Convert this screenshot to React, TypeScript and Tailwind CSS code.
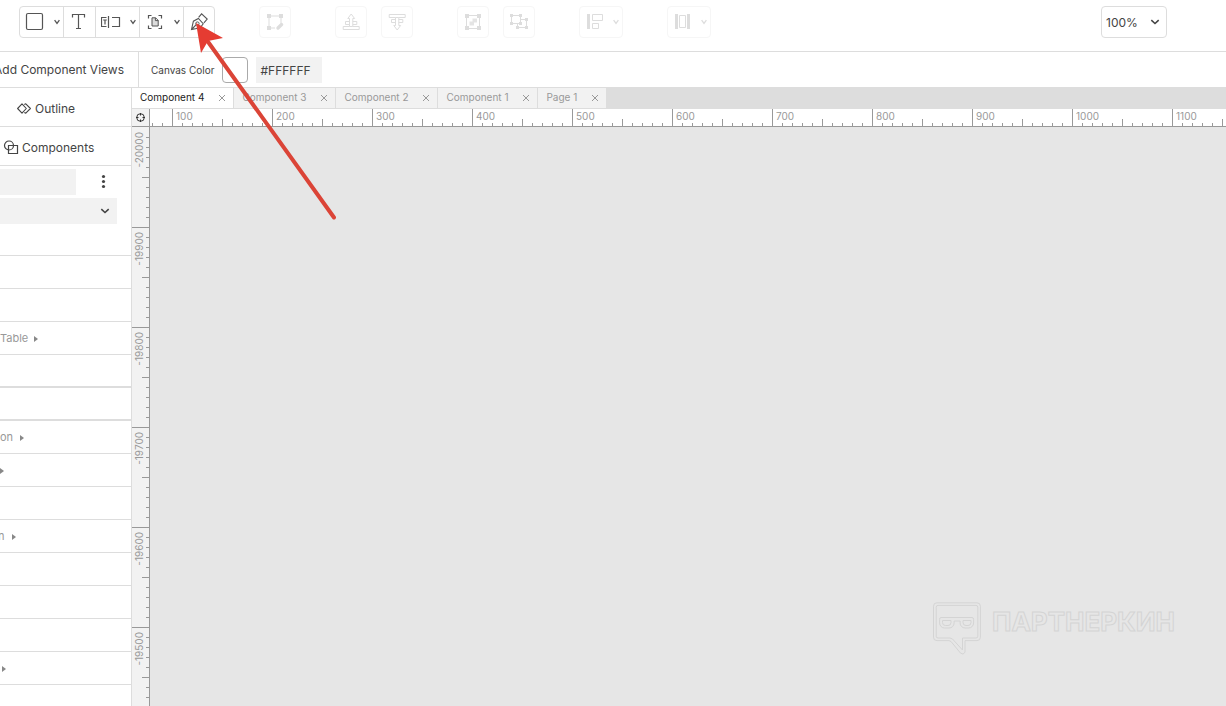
import React, { FC, ReactNode } from "react"

type IconProps = { children: ReactNode }

// All toolbar icons share a 20px box
const Icon: FC<IconProps> = ({ children }) => (
  <svg className="size-5 shrink-0" viewBox="0 0 20 20" fill="none" stroke="currentColor" strokeWidth="1.2">
    {children}
  </svg>
)

const Caret: FC = () => (
  <svg className="w-1.5 h-1.5 shrink-0" viewBox="0 0 6 6" fill="none" stroke="currentColor" strokeWidth="1.3">
    <path d="M.6 1.2 3 4.4 5.4 1.2" />
  </svg>
)

const Chevron: FC<{ className: string }> = ({ className }) => (
  <svg className={`w-2.5 h-2 pointer-events-none ${className}`} viewBox="0 0 10 8" fill="none" stroke="#444" strokeWidth="1.6">
    <path d="M1.3 2.2 5 5.5 8.7 2.2" />
  </svg>
)

const RectIcon = () => <Icon><rect x="1.5" y="1.5" width="16" height="16" rx="1.5" /></Icon>

const TextIcon = () => <Icon><path d="M2.5 5.5v-3h12v3M8.5 2.5v14M6 16.5h5" /></Icon>

const FieldIcon = () => (
  <Icon>
    <path d="M5.5 5.5h-5v9h5M11 5.5h7.5v9H11M7.5 4v12" />
    <path d="M2.2 8h3.6M4 8v4.5" />
  </Icon>
)

const FrameIcon = () => (
  <Icon>
    <path d="M3.5 6.5v-3h3M13.5 3.5h3v3M16.5 13.5v3h-3M6.5 16.5h-3v-3" />
    <path d="M7 5.8h3.6l2.6 2.6V14H7zM10.4 5.8v2.8h2.8" fill="#ddd" strokeWidth="1" />
  </Icon>
)

const PenIcon = () => (
  <Icon>
    <path d="M2.5 17.5 4.4 9.2l5-2.8 4.8 5.3-3 4.1zM2.5 17.5 7 12.8" strokeWidth="1.1" />
    <circle cx="8.4" cy="11.6" r="1.7" strokeWidth="1" />
    <path d="m9.6 5.4 3-3.6L18.200 7l-3.300 3.800" strokeWidth="1.1" />
  </Icon>
)

const EditIcon = () => (
  <Icon>
    <path d="M4 4h12v8M4 4v12h6" strokeWidth="1" />
    <path d="M2 2h4v4H2zM14 2h4v4h-4zM2 14h4v4H2z" fill="currentColor" stroke="none" />
    <path d="m13 16 3.6-3.4" strokeWidth="3.4" strokeLinecap="round" />
  </Icon>
)

const RaiseIcon = () => (
  <Icon>
    <path d="M8.5 14.5H2.2v3h16v-3h-6.4M8.5 9.5h-4v3h4M11.8 9.5h4v3h-4" strokeWidth="1" />
    <path d="M8.5 14.5v-8H6.8L10.200 2l3.400 4.500h-1.800v8z" strokeWidth="1" />
  </Icon>
)

const LowerIcon = () => (
  <Icon>
    <path d="M8.5 5.5H2.2v-3h16v3h-6.4M8.5 10.500h-4v-3h4M11.800 10.500h4v-3h-4" strokeWidth="1" />
    <path d="M8.5 5.5v8H6.8l3.400 4.500 3.400-4.500h-1.800v-8z" strokeWidth="1" />
  </Icon>
)

const GroupIcon = () => (
  <Icon>
    <path d="M3.5 3.5h13v13h-13z" strokeWidth="1" />
    <path d="M2 2h4v4H2zM14 2h4v4h-4zM2 14h4v4H2zM14 14h4v4h-4z" fill="currentColor" stroke="none" />
    <path d="M6.5 9.5h3v-3h4.5v4h-3v3H6.5z" fill="currentColor" stroke="none" opacity=".8" />
  </Icon>
)

const UngroupIcon = () => (
  <Icon>
    <path d="M2.5 3.5h9v8h-9zM11.5 7.5h6v8h-9v-4" strokeWidth="1" />
    <path d="M1 2h3v3H1zM10 2h3v3h-3zM1 10h3v3H1zM10 10h3v3h-3zM16 6h3v3h-3zM16 14h3v3h-3zM7 14h3v3H7z" fill="currentColor" stroke="none" />
  </Icon>
)

const AlignIcon = () => (
  <Icon>
    <path d="M4.5 2v15" strokeWidth="3" />
    <path d="M8.5 2.5h10v6h-10zM8.5 11.5h6v5h-6z" strokeWidth="1" />
  </Icon>
)

const DistributeIcon = () => (
  <Icon>
    <path d="M4.5 2v15M16.5 2v15" strokeWidth="3" />
    <path d="M7.5 3.5h6v12h-6z" strokeWidth="1" />
  </Icon>
)

const tools = [
  { label: "Rectangle", icon: <RectIcon />, menu: true },
  { label: "Text", icon: <TextIcon />, menu: false },
  { label: "Field", icon: <FieldIcon />, menu: true },
  { label: "Frame", icon: <FrameIcon />, menu: true },
  { label: "Pen", icon: <PenIcon />, menu: false },
]

// Actions that need a selection, in clusters
const actions = [
  [{ label: "Edit points", icon: <EditIcon />, menu: false }],
  [
    { label: "Bring forward", icon: <RaiseIcon />, menu: false },
    { label: "Send backward", icon: <LowerIcon />, menu: false },
  ],
  [
    { label: "Group", icon: <GroupIcon />, menu: false },
    { label: "Ungroup", icon: <UngroupIcon />, menu: false },
  ],
  [{ label: "Align", icon: <AlignIcon />, menu: true }],
  [{ label: "Distribute", icon: <DistributeIcon />, menu: true }],
]

const Toolbar: FC = () => (
  <header className="flex items-start h-[52px] pt-1.5 pl-[19px] pr-[59px] border-b border-[#ddd]">
    <div className="flex h-8 border border-[#ddd] rounded divide-x divide-[#ddd] text-[#555]">
      {tools.map(({ label, icon, menu }) => (
        <button
          key={label}
          aria-label={label}
          className={menu ? "w-11 pl-[5px] pr-[3px] flex items-center justify-between" : "w-8 last:w-[30px] flex items-center justify-center"}
        >
          {icon}
          {menu && <Caret />}
        </button>
      ))}
    </div>
    <div className="flex gap-11 ml-11 text-[#ddd]">
      {actions.map((cluster, i) => (
        <div key={i} className="flex gap-3.5">
          {cluster.map(({ label, icon, menu }) => (
            <button
              key={label}
              aria-label={label}
              disabled
              className={`h-8 border border-[#f6f6f6] rounded flex items-center ${menu ? "w-11 pl-1 pr-[3px] justify-between" : "w-8 justify-center"}`}
            >
              {icon}
              {menu && <Caret />}
            </button>
          ))}
        </div>
      ))}
    </div>
    <div className="relative ml-auto">
      <select aria-label="Zoom" className="block appearance-none w-[66px] h-8 pl-1 pt-px border border-[#ddd] rounded text-xs text-[#444]">
        <option>100%</option>
      </select>
      <Chevron className="absolute right-[7px] top-3" />
    </div>
  </header>
)

const OptionsBar: FC = () => (
  <div className="flex h-9 border-b border-[#ddd] text-[#444]">
    <div className="flex items-center justify-end w-[139px] pr-3.5 border-r border-[#ddd] overflow-hidden whitespace-nowrap text-xs">
      Add Component Views
    </div>
    <div className="flex items-center gap-2 pl-3 pt-px">
      <label htmlFor="canvas-color" className="text-[10px]">Canvas Color</label>
      <button aria-label="Pick color" className="size-[26px] border border-[#aaa] rounded bg-white" />
      <input id="canvas-color" defaultValue="#FFFFFF" className="w-[66px] h-[26px] px-1 bg-[#f2f2f2] text-xs" />
    </div>
  </div>
)

const rows = [
  { text: "", arrow: false },
  { text: "", arrow: false },
  { text: "", arrow: false },
  { text: "Table", arrow: true, pad: "gap-1.5" },
  { text: "", arrow: false, thick: true },
  { text: "", arrow: false, thick: true },
  { text: "on", arrow: true, pad: "gap-[7px]" },
  { text: "", arrow: true },
  { text: "", arrow: false },
  { text: "n", arrow: true, pad: "gap-[7px]", cut: true },
  { text: "", arrow: false },
  { text: "", arrow: false },
  { text: "", arrow: false },
  { text: "", arrow: true, pad: "pl-0.5" },
]

const Sidebar: FC = () => (
  <aside className="w-[132px] shrink-0 border-r border-[#ddd] text-xs text-[#444] overflow-hidden">
    <button className="flex items-center gap-[3px] w-full h-[39px] pl-4 pt-1 border-b border-[#ddd]">
      <svg className="w-4 h-4" viewBox="0 0 16 16" fill="none" stroke="currentColor" strokeWidth="1.1" strokeLinejoin="round">
        <path d="M6 2.800 10.300 7.500 6 12.200 1.600 7.500z" />
        <path d="M8.300 3.600 9.800 2.800 14.400 7.500 9.800 12.200 8.300 11.400" />
      </svg>
      Outline
    </button>
    <button className="flex items-center gap-[3px] w-full h-[39px] pl-[3px] pt-1 border-b border-[#ddd]">
      <svg className="w-4 h-4" viewBox="0 0 16 16" fill="none" stroke="currentColor" strokeWidth="1.2">
        <circle cx="6" cy="5.5" r="4.5" />
        <path d="M5.5 5.5h9v8h-9z" />
      </svg>
      Components
    </button>
    <div className="flex justify-between pt-[3px] pr-6">
      <input aria-label="Search components" className="w-[76px] h-[26px] bg-[#f2f2f2]" />
      <button aria-label="More">
        <svg className="w-2 h-4" viewBox="0 0 8 16" fill="#444">
          <circle cx="4.5" cy="2.5" r="1.6" />
          <circle cx="4.5" cy="7.5" r="1.6" />
          <circle cx="4.5" cy="12.5" r="1.6" />
        </svg>
      </button>
    </div>
    <div className="relative w-[117px] mt-[3px]">
      <select aria-label="Library" className="block appearance-none w-full h-[26px] bg-[#f2f2f2]" />
      <Chevron className="absolute right-[7px] top-[9px]" />
    </div>
    <ul className="-mt-px text-[11px] text-[#999]">
      {rows.map(({ text, arrow, pad, thick, cut }, i) => (
        <li key={i} className={`flex items-center h-[33px] pt-px border-[#ddd] ${thick ? "border-b-2" : "border-b"} ${pad ?? ""}`}>
          {text && <span className={cut ? "-ml-0.5" : ""}>{text}</span>}
          {arrow && (
            <svg className="w-1 h-1.5" viewBox="0 0 4 6" fill="#888">
              <path d="M0 0v6l4-3z" />
            </svg>
          )}
        </li>
      ))}
    </ul>
  </aside>
)

const tabs = ["Component 4", "Component 3", "Component 2", "Component 1", "Page 1"]

const Tabs: FC = () => (
  <nav className="flex h-[21px] bg-[#ddd] text-[10px]">
    {tabs.map((tab, i) => (
      <div
        key={tab}
        className={`flex items-center gap-3.5 pl-2 pr-[7px] border-r border-b border-[#ddd] last:border-r-0 ${i === 0 ? "bg-white text-[#222]" : "bg-[#f2f2f2] text-[#999]"}`}
      >
        <button className="pb-0.5">{tab}</button>
        <button aria-label={`Close ${tab}`}>
          <svg className="size-2" viewBox="0 0 8 8" stroke="#999" strokeWidth="1">
            <path d="m1 1 6 6M7 1 1 7" />
          </svg>
        </button>
      </div>
    ))}
  </nav>
)

const ticks = [0, 1, 2, 3, 4, 5, 6, 7, 8, 9]
const columns = Array.from({ length: 40 }, (_, i) => i * 100)
const lines = Array.from({ length: 20 }, (_, i) => -20000 + i * 100)

const TopRuler: FC = () => (
  <div className="flex-1 min-w-0 flex overflow-hidden border-b border-[#999]">
    <div className="flex -ml-[78px]">
      {columns.map(n => (
        <div key={n} className="relative flex items-end w-[100px] shrink-0">
          {ticks.map(t => (
            <i key={t} className={`w-2.5 border-l border-[#999] ${t === 0 ? "h-full" : t === 5 ? "h-[7px]" : "h-[3px]"}`} />
          ))}
          {n > 0 && <span className="absolute left-1 top-0 leading-[15px]">{n}</span>}
        </div>
      ))}
    </div>
  </div>
)

const LeftRuler: FC = () => (
  <div className="w-[18px] shrink-0 overflow-hidden bg-[#f2f2f2] border-r border-[#999]">
    {lines.map(n => (
      <div key={n} className="relative flex flex-col items-end h-[100px]">
        {ticks.map(t => (
          <i key={t} className={`h-2.5 border-t border-[#999] ${t === 0 ? (n === -20000 ? "w-0" : "w-full") : t === 5 ? "w-[7px]" : "w-[3px]"}`} />
        ))}
        <span className="absolute left-0 top-[5px] leading-[15px] [writing-mode:vertical-rl] rotate-180">{n}</span>
      </div>
    ))}
  </div>
)

const Watermark: FC = () => (
  <div className="absolute right-[51px] bottom-[50px] flex gap-2.5 text-[#d4d4d4]">
    <svg className="w-[50px] h-[54px]" viewBox="0 0 50 54" fill="none" stroke="currentColor" strokeWidth="1">
      <path d="M5 .8h40a3.4 3.4 0 0 1 3.4 3.4v31a3.4 3.4 0 0 1-3.4 3.4H33v11.5q-1.5 3.5-4.500 1L19 39.500l-2-.9H5A3.400 3.400 0 0 1 1.500 35.200v-31A3.400 3.400 0 0 1 5 .800z" />
      <path d="M6 3.400h38a1.800 1.800 0 0 1 1.800 1.800v29a1.800 1.800 0 0 1-1.800 1.800H30.500v12L20.500 37 18 36H6a1.800 1.800 0 0 1-1.800-1.800v-29A1.800 1.800 0 0 1 6 3.400z" />
      <path d="M9 15.500h31q1.600 0 1.600 2v3.500a5 5 0 0 1-5 5h-3.500a5 5 0 0 1-5-5v-2h-6v2a5 5 0 0 1-5 5h-4.500a5 5 0 0 1-5-5v-3.500q0-2 1.400-2z" />
      <path d="M10.500 18.500h8.500v2a3 3 0 0 1-3 3h-2.500a3 3 0 0 1-3-3zM31 18.500h8v2a3 3 0 0 1-3 3h-2a3 3 0 0 1-3-3z" />
    </svg>
    <span className="pt-1 text-[26px] leading-8 font-bold text-transparent [-webkit-text-stroke:1px_#d4d4d4]">ПАРТНЕРКИН</span>
  </div>
)

const RedArrow: FC = () => (
  <svg className="absolute left-[190px] top-5 w-[150px] h-[204px] pointer-events-none" viewBox="190 20 150 204">
    <path d="M206 39 334 217.5" stroke="#db4437" strokeWidth="4" strokeLinecap="round" />
    <path d="m196 23 27 15-15 3-7 12z" fill="#e53c32" />
  </svg>
)

const App: FC = () => (
  <div className="relative flex flex-col h-screen overflow-hidden bg-white font-[Inter,sans-serif]">
    <Toolbar />
    <OptionsBar />
    <div className="flex flex-1 min-h-0">
      <Sidebar />
      <main className="flex-1 min-w-0 flex flex-col">
        <Tabs />
        <div className="flex h-[18px] text-[10px] text-[#999]">
          <div className="flex items-center justify-center w-[18px] shrink-0 bg-[#f2f2f2] border-r border-b border-[#999]">
            <svg className="size-[9px]" viewBox="0 0 9 9" fill="none" stroke="#333" strokeWidth="1">
              <circle cx="4.5" cy="4.5" r="3.8" />
              <path d="M4.500 0v2.500M4.500 6.500V9M0 4.500h2.500M6.500 4.500H9" />
            </svg>
          </div>
          <TopRuler />
        </div>
        <div className="flex flex-1 min-h-0 text-[10px] text-[#999]">
          <LeftRuler />
          <div className="relative flex-1 bg-[#e6e6e6]">
            <Watermark />
          </div>
        </div>
      </main>
    </div>
    <RedArrow />
  </div>
)

export default App
